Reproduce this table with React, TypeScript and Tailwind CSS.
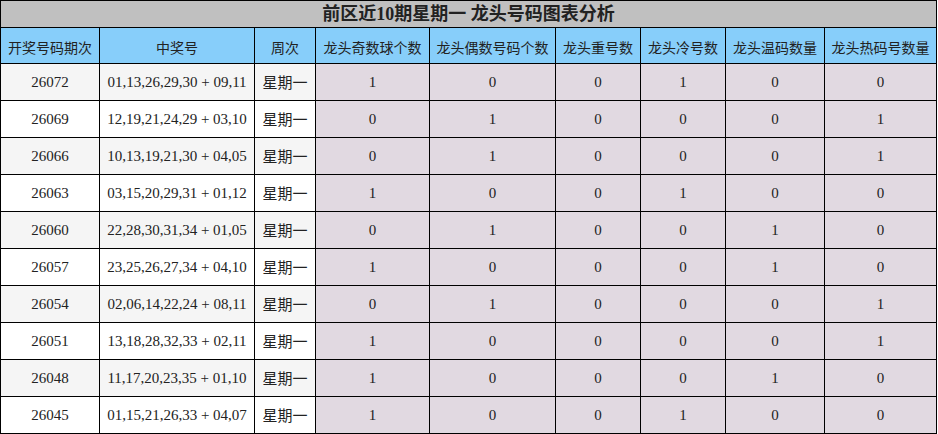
const headers = ["开奖号码期次", "中奖号", "周次", "龙头奇数球个数", "龙头偶数号码个数", "龙头重号数", "龙头冷号数", "龙头温码数量", "龙头热码号数量"]

const rows: [string, string, number[]][] = [
  ["26072", "01,13,26,29,30 + 09,11", [1, 0, 0, 1, 0, 0]],
  ["26069", "12,19,21,24,29 + 03,10", [0, 1, 0, 0, 0, 1]],
  ["26066", "10,13,19,21,30 + 04,05", [0, 1, 0, 0, 0, 1]],
  ["26063", "03,15,20,29,31 + 01,12", [1, 0, 0, 1, 0, 0]],
  ["26060", "22,28,30,31,34 + 01,05", [0, 1, 0, 0, 1, 0]],
  ["26057", "23,25,26,27,34 + 04,10", [1, 0, 0, 0, 1, 0]],
  ["26054", "02,06,14,22,24 + 08,11", [0, 1, 0, 0, 0, 1]],
  ["26051", "13,18,28,32,33 + 02,11", [1, 0, 0, 0, 0, 1]],
  ["26048", "11,17,20,23,35 + 01,10", [1, 0, 0, 0, 1, 0]],
  ["26045", "01,15,21,26,33 + 04,07", [1, 0, 0, 1, 0, 0]],
]

const cell = "flex items-center justify-center border-r border-b border-black"

export default function App() {
  return (
    <div className="w-[938px] bg-white font-['Liberation_Serif','Noto_Sans_CJK_SC',serif] text-[#222]">
      <div className="grid grid-cols-[99px_155px_61px_114px_126px_85px_85px_99px_112px] w-[937px] border-l border-t border-black">
        {/* ── Title ── */}
        <div className={`${cell} col-span-9 h-[27px] bg-[#c0c0c0] text-[18px] font-bold`}>
          前区近10期星期一 龙头号码图表分析
        </div>

        {/* ── Header ── */}
        {headers.map((h) => (
          <div key={h} className={`${cell} h-[36px] bg-[#87cefa] pt-[5px] text-[14px]`}>
            {h}
          </div>
        ))}

        {/* ── Rows ── */}
        {rows.map(([issue, nums, vals], i) => {
          const bg = i % 2 === 0 ? "bg-[#f5f5f5]" : "bg-white"
          return [
            <div key={`${issue}-a`} className={`${cell} h-[37px] ${bg} text-[15px]`}>{issue}</div>,
            <div key={`${issue}-b`} className={`${cell} h-[37px] ${bg} text-[15px]`}>{nums}</div>,
            <div key={`${issue}-c`} className={`${cell} h-[37px] ${bg} pt-[2px] text-[15px]`}>星期一</div>,
            ...vals.map((v, j) => (
              <div key={`${issue}-v${j}`} className={`${cell} h-[37px] bg-[#e1d9e1] text-[15px]`}>{v}</div>
            )),
          ]
        })}
      </div>
    </div>
  )
}
